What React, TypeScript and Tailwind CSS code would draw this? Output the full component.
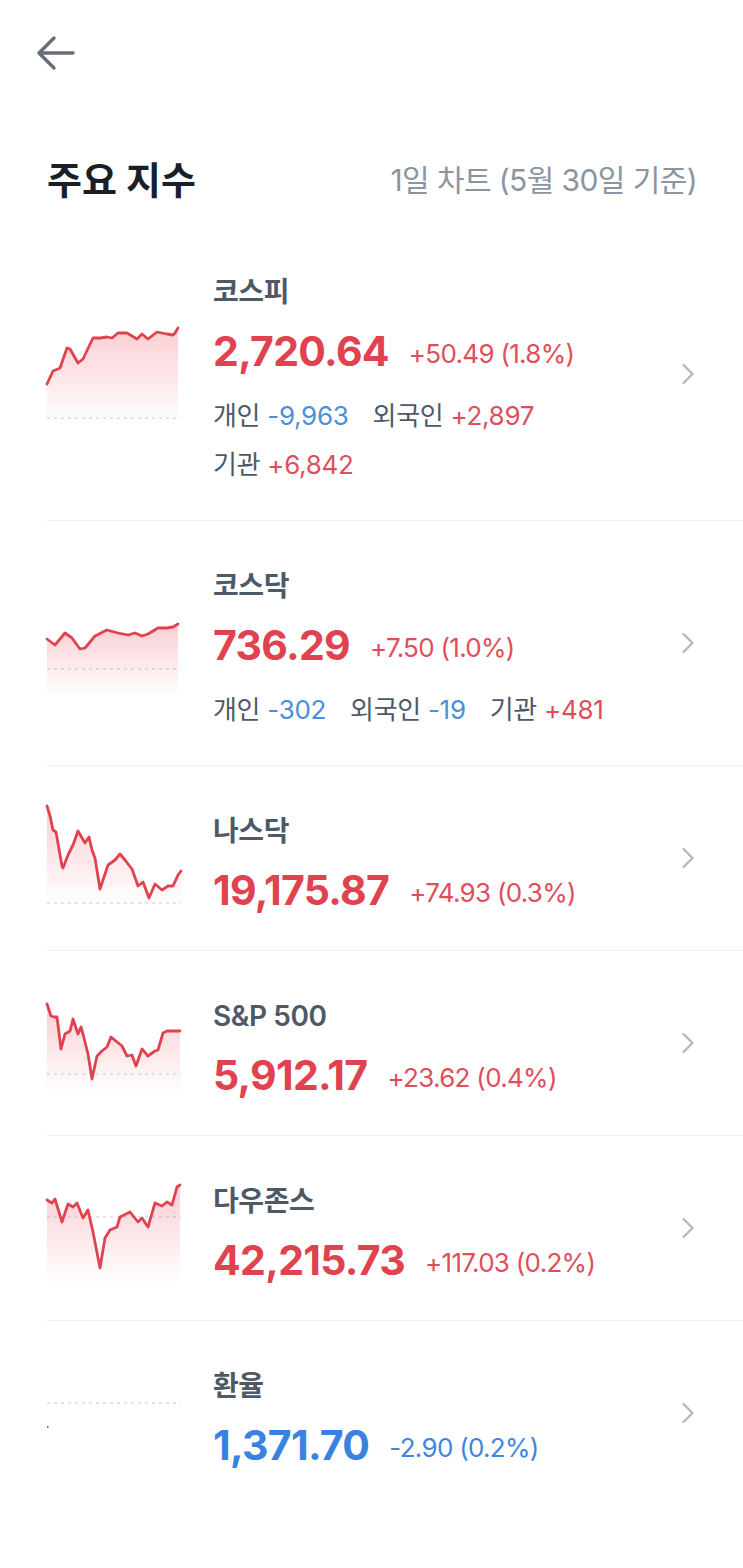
import React from 'react'

type Pt = [number, number]

type Flow = { label: string; value: string; up: boolean }

type Index = {
  name: string
  price: string
  change: string
  up: boolean
  cy: number
  dash: number
  fillBottom?: number
  points: Pt[]
  flows?: Flow[][]
}

/* 차트 좌표는 화면 기준 절대값으로 적고, 그릴 때 행 중심(cy)에 맞춰 옮긴다 */
const indices: Index[] = [
  {
    name: '코스피',
    price: '2,720.64',
    change: '+50.49 (1.8%)',
    up: true,
    cy: 373,
    dash: 417,
    fillBottom: 425,
    points: [
      [47, 383], [53, 370], [60, 367], [67, 347], [70, 348], [78, 362], [83, 358], [93, 337],
      [100, 337], [107, 336], [112, 337], [118, 332], [127, 332], [137, 338], [142, 333],
      [148, 338], [157, 331], [167, 333], [173, 334], [175, 332], [178, 327],
    ],
    flows: [
      [
        { label: '개인', value: '-9,963', up: false },
        { label: '외국인', value: '+2,897', up: true },
      ],
      [{ label: '기관', value: '+6,842', up: true }],
    ],
  },
  {
    name: '코스닥',
    price: '736.29',
    change: '+7.50 (1.0%)',
    up: true,
    cy: 642,
    dash: 667,
    fillBottom: 695,
    points: [
      [47, 637], [55, 643], [65, 631], [72, 636], [80, 647], [85, 646], [95, 634], [107, 628],
      [118, 631], [128, 633], [135, 631], [142, 634], [148, 632], [158, 626], [167, 626],
      [173, 625], [178, 622],
    ],
    flows: [
      [
        { label: '개인', value: '-302', up: false },
        { label: '외국인', value: '-19', up: false },
        { label: '기관', value: '+481', up: true },
      ],
    ],
  },
  {
    name: '나스닥',
    price: '19,175.87',
    change: '+74.93 (0.3%)',
    up: true,
    cy: 856,
    dash: 900,
    fillBottom: 903,
    points: [
      [47, 803], [50, 813], [53, 827], [56, 829], [62, 863], [63, 865], [68, 852], [73, 842],
      [78, 828], [85, 840], [89, 834], [92, 847], [95, 855], [100, 886], [103, 877], [108, 862],
      [115, 857], [120, 851], [125, 857], [132, 866], [138, 883], [143, 879], [149, 895],
      [155, 881], [162, 887], [168, 883], [173, 883], [178, 872], [181, 868],
    ],
  },
  {
    name: 'S&P 500',
    price: '5,912.17',
    change: '+23.62 (0.4%)',
    up: true,
    cy: 1040,
    dash: 1070,
    fillBottom: 1092,
    points: [
      [47, 1000], [51, 1012], [54, 1013], [57, 1013], [61, 1045], [65, 1030], [70, 1027],
      [73, 1015], [78, 1030], [81, 1023], [83, 1030], [88, 1050], [92, 1075], [97, 1052],
      [102, 1047], [107, 1043], [111, 1033], [117, 1038], [122, 1042], [127, 1052], [132, 1051],
      [136, 1062], [142, 1045], [148, 1052], [155, 1047], [158, 1046], [163, 1029], [167, 1027],
      [180, 1027],
    ],
  },
  {
    name: '다우존스',
    price: '42,215.73',
    change: '+117.03 (0.2%)',
    up: true,
    cy: 1224,
    dash: 1212,
    fillBottom: 1278,
    points: [
      [47, 1195], [52, 1198], [55, 1194], [62, 1217], [68, 1199], [73, 1202], [77, 1198],
      [83, 1213], [88, 1205], [93, 1227], [100, 1263], [105, 1233], [110, 1225], [117, 1222],
      [120, 1212], [130, 1207], [138, 1217], [142, 1213], [148, 1222], [155, 1198], [162, 1201],
      [167, 1197], [172, 1200], [177, 1182], [180, 1180],
    ],
  },
  {
    name: '환율',
    price: '1,371.70',
    change: '-2.90 (0.2%)',
    up: false,
    cy: 1408,
    dash: 1397,
    points: [],
  },
]

function MiniChart({ item, id }: { item: Index; id: string }) {
  const top = item.cy - 70
  const pts = item.points.map(([x, y]) => [x - 47, y - top] as Pt)
  const line = pts.map(([x, y], i) => `${i ? 'L' : 'M'}${x} ${y}`).join(' ')
  const minY = pts.length ? Math.min(...pts.map((p) => p[1])) : 0
  const bottom = (item.fillBottom ?? 0) - top
  const fill =
    pts.length > 0
      ? `${line} L${pts[pts.length - 1][0]} ${bottom} L${pts[0][0]} ${bottom} Z`
      : ''

  return (
    <svg width="136" height="140" viewBox="0 0 136 140" className="shrink-0 overflow-visible">
      <defs>
        <linearGradient id={id} x1="0" y1={minY} x2="0" y2={bottom} gradientUnits="userSpaceOnUse">
          <stop offset="0" stopColor="#f04452" stopOpacity="0.26" />
          <stop offset="1" stopColor="#f04452" stopOpacity="0" />
        </linearGradient>
      </defs>
      <line
        x1="0"
        x2="134"
        y1={item.dash - top}
        y2={item.dash - top}
        stroke="#c5cad1"
        strokeWidth="1"
        strokeDasharray="3 4"
      />
      {fill && <path d={fill} fill={`url(#${id})`} />}
      {line && (
        <path
          d={line}
          fill="none"
          stroke="#e0424f"
          strokeWidth="2.8"
          strokeLinejoin="round"
          strokeLinecap="round"
        />
      )}
      {!pts.length && <rect x="0" y={1420 - top} width="1.5" height="2" fill="#3a7fe0" />}
    </svg>
  )
}

function Chevron() {
  return (
    <svg width="14" height="24" viewBox="0 0 14 24" className="shrink-0">
      <path
        d="M2.5 3 L11.5 12 L2.5 21"
        fill="none"
        stroke="#b3b9c1"
        strokeWidth="2.4"
        strokeLinecap="round"
        strokeLinejoin="round"
      />
    </svg>
  )
}

function IndexRow({ item, index }: { item: Index; index: number }) {
  const hasFlows = !!item.flows
  const last = index === indices.length - 1
  return (
    <div className="flex items-center pl-[47px]">
      <MiniChart item={item} id={`grad-${index}`} />
      <div
        className={`flex flex-1 self-stretch items-center border-b -ml-[136px] pl-[166px] pr-[48px] ${
          last ? 'border-transparent' : 'border-[#f0f2f4]'
        }`}
      >
        <div className={`flex-1 pt-[48px] ${hasFlows ? 'pb-[38px]' : 'pb-[36px]'}`}>
          <div className="text-[28px] leading-[34px] font-semibold text-[#4e5968] tracking-[-0.4px]">
            {item.name}
          </div>
          <div className="mt-[18px] flex items-center h-[48px]">
            <span
              className={`text-[41px] leading-[48px] font-bold tracking-[-0.7px] ${
                item.up ? 'text-[#e0424f]' : 'text-[#3a82e2]'
              }`}
            >
              {item.price}
            </span>
            <span
              className={`ml-[20px] mt-[4px] text-[26px] tracking-[-0.7px] ${
                item.up ? 'text-[#e04e5b]' : 'text-[#3f86de]'
              }`}
            >
              {item.change}
            </span>
          </div>
          {item.flows && (
            <div className="mt-[24px] flex flex-col gap-[15px]">
              {item.flows.map((line, li) => (
                <div key={li} className="flex gap-x-[24px] text-[26px] leading-[34px] tracking-[-0.3px]">
                  {line.map((f) => (
                    <span key={f.label} className="text-[#4e5968]">
                      {f.label}{' '}
                      <span className={f.up ? 'text-[#dc4f5c]' : 'text-[#4a8fda]'}>{f.value}</span>
                    </span>
                  ))}
                </div>
              ))}
            </div>
          )}
        </div>
        <Chevron />
      </div>
    </div>
  )
}

export default function App() {
  return (
    <div
      className="min-h-[1568px] w-full bg-white"
      style={{ fontFamily: 'Inter, "Noto Sans CJK KR", "Noto Sans", sans-serif' }}
    >
      {/* 뒤로가기 */}
      <div className="flex h-[106px] items-center pl-[36px]">
        <svg width="40" height="36" viewBox="0 0 40 36">
          <path
            d="M37 18 H3 M18 3 L3 18 L18 33"
            fill="none"
            stroke="#666d75"
            strokeWidth="3.4"
            strokeLinecap="round"
            strokeLinejoin="round"
          />
        </svg>
      </div>

      {/* 제목 */}
      <div className="mt-[52px] flex items-center justify-between pl-[47px] pr-[46px]">
        <h1 className="text-[38px] leading-[44px] font-bold text-[#191f28]">주요 지수</h1>
        <span className="text-[30px] leading-[36px] text-[#8b95a1] tracking-[-0.6px]">
          1일 차트 (5월 30일 기준)
        </span>
      </div>

      <div className="mt-[25px]">
        {indices.map((item, i) => (
          <IndexRow key={item.name} item={item} index={i} />
        ))}
      </div>
    </div>
  )
}
